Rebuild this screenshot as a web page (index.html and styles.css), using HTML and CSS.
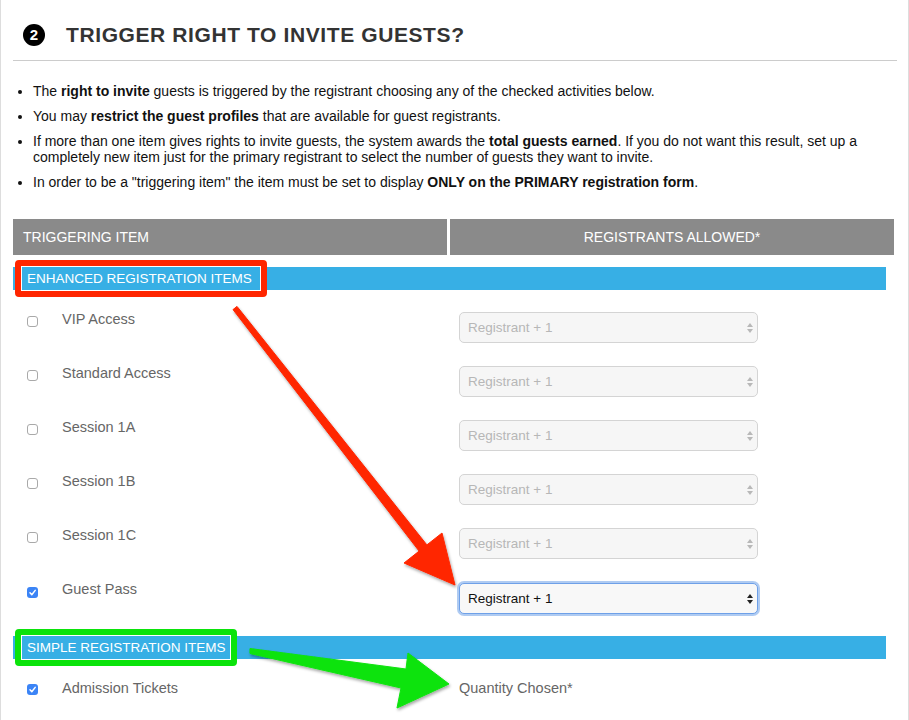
FILE: index.html
```html
<!DOCTYPE html>
<html lang="en">
<head>
  <meta charset="UTF-8" />
  <meta name="viewport" content="width=device-width, initial-scale=1.0"/>
  <title>Trigger right to invite guests</title>
  <link rel="stylesheet" href="styles.css">
</head>
<body>
  <div class="page">
    <div class="step-title">
      <span class="step-num">2</span>
      <h1>TRIGGER RIGHT TO INVITE GUESTS?</h1>
    </div>

    <ul class="notes">
      <li>The <strong>right to invite</strong> guests is triggered by the registrant choosing any of the checked activities below.</li>
      <li>You may <strong>restrict the guest profiles</strong> that are available for guest registrants.</li>
      <li>If more than one item gives rights to invite guests, the system awards the <strong>total guests earned</strong>. If you do not want this result, set up a completely new item just for the primary registrant to select the number of guests they want to invite.</li>
      <li>In order to be a "triggering item" the item must be set to display <strong>ONLY on the PRIMARY registration form</strong>.</li>
    </ul>

    <div class="grid-head">
      <div class="head-cell">TRIGGERING ITEM</div>
      <div class="head-cell center">REGISTRANTS ALLOWED*</div>
    </div>

    <!-- enhanced items -->
    <div class="section">
      <span class="section-label mark-red">ENHANCED REGISTRATION ITEMS</span>
    </div>

    <div class="item-row first">
      <div class="item-name"><span class="box"></span><span class="label">VIP Access</span></div>
      <div class="fake-select"><span>Registrant + 1</span><svg class="updown" width="6" height="10" viewBox="0 0 6 10"><polygon points="0,4 3,0 6,4"/><polygon points="0,6 3,10 6,6"/></svg></div>
    </div>
    <div class="item-row">
      <div class="item-name"><span class="box"></span><span class="label">Standard Access</span></div>
      <div class="fake-select"><span>Registrant + 1</span><svg class="updown" width="6" height="10" viewBox="0 0 6 10"><polygon points="0,4 3,0 6,4"/><polygon points="0,6 3,10 6,6"/></svg></div>
    </div>
    <div class="item-row">
      <div class="item-name"><span class="box"></span><span class="label">Session 1A</span></div>
      <div class="fake-select"><span>Registrant + 1</span><svg class="updown" width="6" height="10" viewBox="0 0 6 10"><polygon points="0,4 3,0 6,4"/><polygon points="0,6 3,10 6,6"/></svg></div>
    </div>
    <div class="item-row">
      <div class="item-name"><span class="box"></span><span class="label">Session 1B</span></div>
      <div class="fake-select"><span>Registrant + 1</span><svg class="updown" width="6" height="10" viewBox="0 0 6 10"><polygon points="0,4 3,0 6,4"/><polygon points="0,6 3,10 6,6"/></svg></div>
    </div>
    <div class="item-row">
      <div class="item-name"><span class="box"></span><span class="label">Session 1C</span></div>
      <div class="fake-select"><span>Registrant + 1</span><svg class="updown" width="6" height="10" viewBox="0 0 6 10"><polygon points="0,4 3,0 6,4"/><polygon points="0,6 3,10 6,6"/></svg></div>
    </div>
    <div class="item-row">
      <div class="item-name">
        <span class="box checked"><svg width="11" height="11" viewBox="0 0 11 11"><path d="M3 5.8 L4.8 7.7 L8.2 3.4"/></svg></span>
        <span class="label">Guest Pass</span>
      </div>
      <div class="fake-select focused"><span>Registrant + 1</span><svg class="updown" width="6" height="10" viewBox="0 0 6 10"><polygon points="0,4 3,0 6,4"/><polygon points="0,6 3,10 6,6"/></svg></div>
    </div>

    <!-- simple items -->
    <div class="section next">
      <span class="section-label mark-green">SIMPLE REGISTRATION ITEMS</span>
    </div>

    <div class="item-row simple">
      <div class="item-name">
        <span class="box checked"><svg width="11" height="11" viewBox="0 0 11 11"><path d="M3 5.8 L4.8 7.7 L8.2 3.4"/></svg></span>
        <span class="label">Admission Tickets</span>
      </div>
      <div class="qty">Quantity Chosen*</div>
    </div>

    <!-- annotation arrows -->
    <svg class="arrows" width="909" height="720" viewBox="0 0 909 720">
      <defs>
        <filter id="shade" x="-10%" y="-10%" width="120%" height="120%">
          <feDropShadow dx="1" dy="2" stdDeviation="1.5" flood-color="#000" flood-opacity="0.35"/>
        </filter>
      </defs>
      <polygon class="arrow-red" filter="url(#shade)" points="233,309.6 237,306.4 426.9,544.9 442,533 455,585 404,563 419.1,551.1"/>
      <polygon class="arrow-green" filter="url(#shade)" points="250,648.5 406,669 408,653 449,684 397,708 401,688 250,653.5"/>
    </svg>
  </div>
</body>
</html>
```

FILE: styles.css
```css
body {
  margin: 0;
  font-family: "Liberation Sans", Arial, sans-serif;
  background-color: #ffffff;
}

.page {
  position: relative;
  width: 909px;
  height: 720px;
  overflow: hidden;
  box-sizing: border-box;
  border-left: 1px solid #dddddd;
  border-right: 1px solid #dddddd;
  padding: 0 12px 0 12px;
}

.step-title {
  display: flex;
  align-items: center;
  gap: 21px;
  height: 61px;
  box-sizing: border-box;
  padding-top: 10px;
  padding-left: 10px;
  border-bottom: 1px solid #cccccc;
  width: 884px;
}

.step-num {
  width: 22px;
  height: 22px;
  border-radius: 50%;
  background-color: #000;
  color: #fff;
  font-size: 15px;
  font-weight: bold;
  line-height: 22px;
  text-align: center;
}

.step-title h1 {
  margin: 0;
  font-size: 21px;
  letter-spacing: 0.6px;
  color: #333;
}

.notes {
  margin: 22px 0 29px 0;
  padding-left: 20px;
  font-size: 14px;
  line-height: 16px;
  color: #111;
}

.notes li {
  margin-bottom: 9px;
}

.notes li:last-child {
  margin-bottom: 0;
}

.grid-head {
  display: grid;
  grid-template-columns: 434px 444px;
  gap: 3px;
  height: 36px;
}

.head-cell {
  background-color: #8a8a8a;
  color: #fff;
  font-size: 14px;
  line-height: 36px;
  padding-left: 10px;
}

.head-cell.center {
  text-align: center;
  padding-left: 0;
}

.section {
  margin-top: 12px;
  width: 873px;
  height: 23px;
  background-color: #37afe5;
}

.section.next {
  margin-top: 23px;
}

.section-label {
  position: relative;
  display: inline-block;
  box-sizing: border-box;
  height: 25px;
  margin: -1px 0 0 8px;
  padding: 0 8px 0 5px;
  border: 1px solid #fff;
  color: #fff;
  font-size: 13.5px;
  line-height: 23px;
  vertical-align: top;
}

.section-label::after {
  content: "";
  position: absolute;
  inset: -7px;
  border: 6px solid;
  border-radius: 4px;
}

.mark-red::after {
  border-color: #ff2600;
}

.mark-green {
  padding-right: 4px;
}

.mark-green::after {
  border-color: #0be30b;
}

.item-row {
  display: flex;
  align-items: flex-start;
  height: 31px;
  margin-top: 23px;
}

.item-row.first {
  margin-top: 22px;
}

.item-row.simple {
  margin-top: 20px;
  height: 20px;
}

.item-name {
  display: flex;
  align-items: flex-start;
  width: 446px;
}

.box {
  width: 11px;
  height: 11px;
  box-sizing: border-box;
  margin: 4px 0 0 14px;
  border: 1px solid #a9a9a9;
  border-radius: 3px;
  background-color: #fff;
}

.box.checked {
  margin-top: 5px;
  border: none;
  background-color: #3b84f6;
}

.box svg {
  display: block;
}

.box path {
  fill: none;
  stroke: #fff;
  stroke-width: 1.5;
  stroke-linecap: round;
  stroke-linejoin: round;
}

.label {
  margin: -2px 0 0 24px;
  font-size: 14.5px;
  line-height: 18px;
  color: #666;
}

.simple .label {
  margin-top: 0;
}

.fake-select {
  display: flex;
  align-items: center;
  justify-content: space-between;
  width: 299px;
  height: 31px;
  box-sizing: border-box;
  padding: 0 4px 0 8px;
  border: 1px solid #d4d4d4;
  border-radius: 5px;
  background-color: #f6f6f6;
  color: #b7b7b7;
  font-size: 13.5px;
}

.updown {
  fill: #b8b8b8;
}

.fake-select.focused {
  margin-top: 1px;
  border-color: #6ea0e8;
  box-shadow: 0 0 0 2px rgba(110, 160, 232, 0.55);
  background-color: #f8f8f8;
  color: #111;
}

.focused .updown {
  fill: #222;
}

.qty {
  font-size: 14.5px;
  line-height: 18px;
  color: #666;
}

.arrows {
  position: absolute;
  top: 0;
  left: -1px;
  pointer-events: none;
}

.arrow-red {
  fill: #ff2600;
  stroke: #ff2600;
  stroke-width: 1;
  stroke-linejoin: round;
}

.arrow-green {
  fill: #0be30b;
  stroke: #0be30b;
  stroke-width: 1;
  stroke-linejoin: round;
}
```
